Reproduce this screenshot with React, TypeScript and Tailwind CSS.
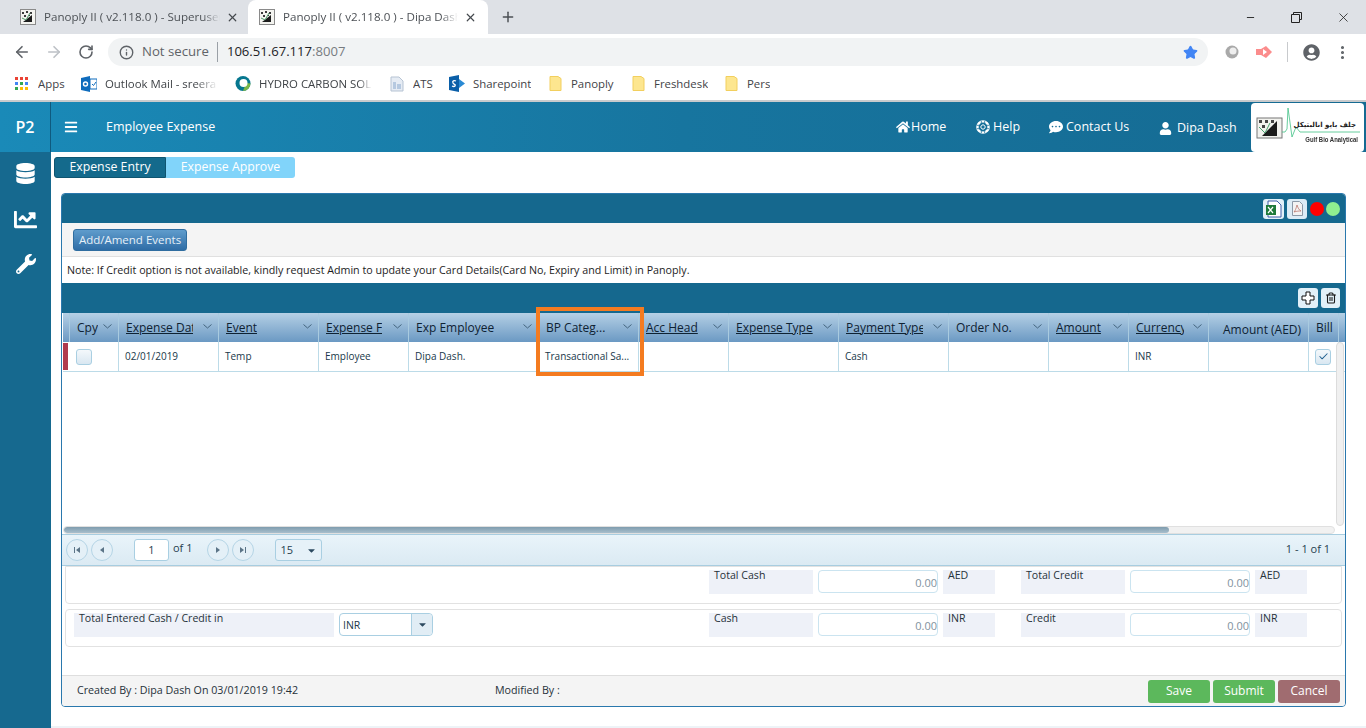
import React from "react";
import { ArrowLeft, ArrowRight, RotateCw, Info, Star, Plus, X, Minus, MoreVertical, Trash2, Check } from "lucide-react";
import { FaHome, FaCommentDots, FaUser, FaDatabase, FaChartLine, FaWrench, FaBars, FaUserCircle, FaCaretDown } from "react-icons/fa";

const Favicon = () => (
  <svg width="16" height="16" viewBox="0 0 16 16" className="shrink-0">
    <rect x="0.5" y="0.5" width="15" height="15" fill="#f4f4f0" stroke="#8a8a8a" />
    <path d="M3 13 L12 13 L12 6 Z" fill="#1c1c1c" />
    <path d="M2 3h2v2H2zM6 2h2v2H6zM10 3h2v2h-2zM4 6h2v2H4zM9 6h1v1H9z" fill="#3a3a3a" />
    <path d="M2 9 L6 11 L10 4" stroke="#4f9b6a" strokeWidth="1" fill="none" />
  </svg>
);

const Folder = () => (
  <svg width="13" height="17" viewBox="0 0 13 17" className="shrink-0">
    <path d="M1 1.5h8l3 2V15.5H1z" fill="#fde68f" stroke="#f2cf5e" />
  </svg>
);

const Tab = ({ title, active }: { title: string; active?: boolean }) => (
  <div className={active ? "flex items-center w-[240px] h-[34px] pl-[11px] pr-[11px] bg-white rounded-t-lg" : "flex items-center w-[248px] h-[34px] pl-[20px] pr-[9px]"}>
    <Favicon />
    <span className="ml-[8px] mr-[6px] flex-1 overflow-hidden whitespace-nowrap text-[11.6px] text-[#4d5156] [mask-image:linear-gradient(to_right,black_90%,transparent)]">{title}</span>
    <X size={13} strokeWidth={2.2} className="text-[#45494e] shrink-0" />
  </div>
);

const Bookmark = ({ w, icon, label, fade }: { w: string; icon: React.ReactNode; label: string; fade?: string }) => (
  <div className={`flex items-center shrink-0 ${w}`}>
    {icon}
    <span className={`whitespace-nowrap overflow-hidden text-[11.4px] text-[#3f4347] ${fade ?? ""}`}>{label}</span>
  </div>
);

const NavItem = ({ icon, label, cls }: { icon: React.ReactNode; label: string; cls: string }) => (
  <div className={`flex items-center text-white text-[12.5px] ${cls}`}>
    {icon}
    <span>{label}</span>
  </div>
);

const COLS = "grid grid-cols-[7px_49px_100px_100px_90px_130px_100px_90px_110px_110px_100px_80px_80px_100px_30px]";

const HeadCell = ({ label, u, noArrow, pt, mw }: { label: string; u?: boolean; noArrow?: boolean; pt?: boolean; mw?: string }) => (
  <div className="relative flex items-center h-full pl-[7px] border-r border-[#a9cbe0] overflow-hidden">
    <span className={`whitespace-nowrap overflow-hidden text-[12px] font-medium text-[#0e2233] ${mw ?? ""} ${u ? "underline" : ""} ${pt ? "pt-[4px] pl-[7px]" : ""}`}>{label}</span>
    {!noArrow && <svg width="9" height="5" viewBox="0 0 9 5" className="absolute right-[6px] top-[11px]"><path d="M0.5 0.5 L4.5 4 L8.5 0.5" stroke="#44657f" fill="none" /></svg>}
  </div>
);

const Cell = ({ children }: { children?: React.ReactNode }) => (
  <div className="flex items-center h-full pl-[6px] border-r border-[#bcdbe8] text-[10px] text-[#20384a] whitespace-nowrap overflow-hidden">{children}</div>
);

const PageBtn = ({ d, cls }: { d: string; cls?: string }) => (
  <div className={`flex items-center justify-center w-[22px] h-[22px] rounded-full border border-[#b5d5e6] bg-[#e4f0f7] ${cls ?? ""}`}>
    <svg width="8" height="8" viewBox="0 0 8 8"><path d={d} fill="#5b7487" /></svg>
  </div>
);

const Label = ({ w, text, cls }: { w: string; text: string; cls?: string }) => (
  <div className={`h-[24px] bg-[#eef1f8] text-[10.6px] leading-[10px] text-[#26313a] pl-[5px] shrink-0 ${w} ${cls ?? ""}`}>{text}</div>
);

const Amount = () => (
  <div className="w-[120px] h-[23px] shrink-0 ml-[5px] mr-[5px] rounded-[4px] border border-[#cbe4f0] bg-white flex items-end justify-end text-[11px] text-[#7f929e] pb-[3px] leading-[13px]">0.00</div>
);

const ActionBtn = ({ label, cls }: { label: string; cls: string }) => (
  <div className={`flex items-center justify-center w-[62px] h-[23px] rounded-[3px] text-white text-[12px] font-medium ${cls}`}>{label}</div>
);

export default function App() {
  return (
    <div className="relative w-[1366px] h-[728px] overflow-hidden bg-white flex flex-col font-['Open_Sans','Noto_Sans',sans-serif]">
      {/* Tab strip */}
      <div className="h-[34px] bg-[#dee1e6] flex items-center shrink-0">
        <Tab title="Panoply II ( v2.118.0 ) - Superuser" />
        <Tab title="Panoply II ( v2.118.0 ) - Dipa Dash" active />
        <Plus size={16} strokeWidth={2.2} className="ml-[12px] text-[#4b4f54]" />
        <div className="flex-1" />
        <Minus size={11} className="text-[#222] mr-[35px]" />
        <svg width="11" height="11" viewBox="0 0 11 11" className="mr-[34px]"><path d="M2.5 2.5V.5h8v7h-2M.5 2.5h8v8h-8z" fill="none" stroke="#222" /></svg>
        <X size={15} strokeWidth={1.3} className="text-[#222] mr-[15px]" />
      </div>
      {/* Toolbar */}
      <div className="h-[34px] bg-white flex items-center shrink-0 pl-[13px] pt-[2px]">
        <ArrowLeft size={18} strokeWidth={2.2} className="text-[#5f6368]" />
        <ArrowRight size={18} strokeWidth={2.2} className="text-[#bdc1c6] ml-[14px]" />
        <RotateCw size={16} strokeWidth={2.4} className="text-[#5f6368] ml-[15px]" />
        <div className="ml-[14px] w-[1100px] h-[28px] rounded-full bg-[#f1f3f4] flex items-center pl-[11px]">
          <Info size={15} strokeWidth={2.2} className="text-[#5f6368]" />
          <span className="ml-[8px] text-[13.2px] text-[#5f6368]">Not secure</span>
          <div className="w-px h-[20px] bg-[#9aa0a6] ml-[8px]" />
          <span className="ml-[9px] text-[13.1px] text-[#202124]">106.51.67.117<span className="text-[#777b80]">:8007</span></span>
          <div className="flex-1" />
          <Star size={15} fill="#4285f4" stroke="#4285f4" className="mr-[10px]" />
        </div>
        <svg width="16" height="16" viewBox="0 0 16 16" className="ml-[16px]"><circle cx="8" cy="8" r="6.5" fill="#a9a9a9" /><circle cx="9" cy="7" r="3.5" fill="#eee" /></svg>
        <svg width="18" height="14" viewBox="0 0 18 14" className="ml-[15px]"><path d="M1 4h5l5-3 6 6-6 6-5-3H1z" fill="#fb8c8c" /><path d="M8 4l4 3-4 3z" fill="#fff" /></svg>
        <div className="w-px h-[20px] bg-[#c8cacd] ml-[14px]" />
        <FaUserCircle size={17} className="text-[#5f6368] ml-[15px]" />
        <MoreVertical size={17} strokeWidth={2.4} className="text-[#5f6368] ml-[14px]" />
      </div>
      {/* Bookmarks */}
      <div className="h-[34px] bg-white flex items-center shrink-0 pl-[15px] border-b-[2px] border-[#c9cbcd]">
        <Bookmark
          w="w-[66px]"
          label="Apps"
          icon={
            <svg width="13" height="13" viewBox="0 0 13 13" className="mr-[10px]">
              <path d="M0 0h3v3H0z" fill="#ea4335" /><path d="M5 0h3v3H5z" fill="#ea4335" /><path d="M10 0h3v3h-3z" fill="#ea4335" />
              <path d="M0 5h3v3H0z" fill="#4285f4" /><path d="M5 5h3v3H5z" fill="#34a853" /><path d="M10 5h3v3h-3z" fill="#4285f4" />
              <path d="M0 10h3v3H0z" fill="#34a853" /><path d="M5 10h3v3H5z" fill="#fbbc05" /><path d="M10 10h3v3h-3z" fill="#fbbc05" />
            </svg>
          }
        />
        <Bookmark
          w="w-[154px]"
          label="Outlook Mail - sreera"
          fade="w-[113px] [mask-image:linear-gradient(to_right,black_80%,transparent)]"
          icon={
            <svg width="16" height="16" viewBox="0 0 16 16" className="mr-[8px] shrink-0">
              <path d="M0 2l9-2v16l-9-2z" fill="#0f6cbd" /><rect x="9" y="3" width="7" height="10" fill="#fff" stroke="#0f6cbd" />
              <circle cx="4.5" cy="8" r="2" fill="none" stroke="#fff" strokeWidth="1.4" /><path d="M11 8l1.5 1.5L15 6" stroke="#0f6cbd" fill="none" />
            </svg>
          }
        />
        <Bookmark
          w="w-[155px]"
          label="HYDRO CARBON SOL"
          fade="w-[113px] [mask-image:linear-gradient(to_right,black_88%,transparent)]"
          icon={
            <svg width="16" height="17" viewBox="0 0 16 17" className="mr-[8px] shrink-0">
              <circle cx="8" cy="8.5" r="7.5" fill="#06778f" /><path d="M8 16A7.5 7.5 0 0 0 15.5 8.5L11 8z" fill="#7ab648" /><circle cx="8.5" cy="8" r="4" fill="#fff" />
            </svg>
          }
        />
        <Bookmark
          w="w-[59px]"
          label="ATS"
          icon={
            <svg width="14" height="16" viewBox="0 0 14 16" className="mr-[9px] shrink-0">
              <path d="M1 1h8l4 4v10H1z" fill="#e6ecf4" stroke="#b6c3d3" /><path d="M3 6h3v7H3zM7 8h4v5H7z" fill="#b6c9e0" />
            </svg>
          }
        />
        <Bookmark
          w="w-[100px]"
          label="Sharepoint"
          icon={
            <svg width="16" height="17" viewBox="0 0 16 17" className="mr-[8px] shrink-0">
              <path d="M0 2l10-2v17L0 15z" fill="#0a5fa8" /><path d="M10 4l6 4.5-6 4.5z" fill="#2a8ad4" />
              <path d="M7 6C5 5 3 6 4 8s3 1 2 3c-1 1-2 .5-3 0" stroke="#fff" strokeWidth="1.3" fill="none" />
            </svg>
          }
        />
        <Bookmark w="w-[83px]" label="Panoply" icon={<span className="mr-[9px]"><Folder /></span>} />
        <Bookmark w="w-[93px]" label="Freshdesk" icon={<span className="mr-[9px]"><Folder /></span>} />
        <Bookmark w="w-[60px]" label="Pers" icon={<span className="mr-[9px]"><Folder /></span>} />
      </div>
      {/* App header */}
      <div className="h-[50px] shrink-0 bg-gradient-to-r from-[#1a8ab8] via-[#17759f] to-[#156a92] flex items-center">
        <div className="w-[51px] h-full border-r border-[#0f5a7e] flex items-center justify-center text-white font-semibold text-[16px] shrink-0">P2</div>
        <FaBars size={14} className="text-white ml-[13px]" />
        <span className="ml-[28px] text-white text-[12.5px]">Employee Expense</span>
        <div className="flex-1" />
        <NavItem cls="w-[80px]" icon={<FaHome size={14} className="mr-[1px]" />} label="Home" />
        <NavItem
          cls="w-[73px]"
          label="Help"
          icon={
            <svg width="14" height="14" viewBox="0 0 14 14" className="mr-[3px]">
              <circle cx="7" cy="7" r="5.6" fill="none" stroke="#fff" strokeWidth="2.4" />
              <circle cx="7" cy="7" r="2.2" fill="none" stroke="#fff" strokeWidth="1" />
              <path d="M5.3 1v4M8.7 1v4M5.3 9v4M8.7 9v4M1 5.3h4M1 8.7h4M9 5.3h4M9 8.7h4" stroke="#16709a" strokeWidth=".8" />
            </svg>
          }
        />
        <NavItem cls="w-[110px]" icon={<FaCommentDots size={14} className="mr-[3px]" />} label="Contact Us" />
        <NavItem cls="w-[92px] pt-[2px]" icon={<FaUser size={13} className="mr-[5px]" />} label="Dipa Dash" />
        <div className="w-[113px] h-[49px] mr-[2px] bg-white rounded-[4px] relative overflow-hidden shrink-0">
          <svg width="108" height="36" viewBox="0 0 108 36" className="absolute left-[5px] top-[4px]">
            <rect x="1" y="11" width="25" height="20" fill="#f2f2ee" stroke="#777" />
            <path d="M6 29 L21 29 L21 14 Z" fill="#1b1b1b" />
            <path d="M3 13h3v3H3zM9 13h3v3H9zM15 13h3v3h-3zM6 18h3v3H6z" fill="#444" />
            <path d="M3 20l6 6 5-10" stroke="#4aa36f" fill="none" />
            <path d="M26 25h3l2-3 1-21 4 29 4-10 4 5h60" stroke="#43c187" strokeWidth="0.8" fill="none" />
          </svg>
          <span className="absolute right-[8px] top-[16px] text-[7px] leading-[12px] font-bold text-[#222] font-['DejaVu_Sans',sans-serif] whitespace-nowrap" dir="rtl">جلف بايو انالبتيكل</span>
          <span className="absolute right-[6px] top-[31px] text-[7px] leading-[12px] font-bold text-[#333] whitespace-nowrap origin-right scale-x-[0.85] font-['Liberation_Sans',sans-serif]">Gulf Bio Analytical</span>
        </div>
      </div>
      {/* Body */}
      <div className="flex-1 flex min-h-0">
        <div className="w-[51px] shrink-0 bg-[#16698f] flex flex-col items-center pt-[11px] text-white">
          <FaDatabase size={21} />
          <FaChartLine size={23} className="mt-[24px]" />
          <FaWrench size={20} className="mt-[23px]" />
        </div>
        <div className="flex-1 min-w-0 flex flex-col pl-[3px]">
          <div className="flex pt-[5px] h-[41px] shrink-0 items-start">
            <div className="w-[112px] h-[21px] rounded-l-[3px] bg-[#146a8c] border border-[#0f5570] text-white text-[12.3px] flex items-center justify-center">Expense Entry</div>
            <div className="w-[129px] h-[21px] rounded-r-[3px] bg-[#81d4fa] text-white text-[12.3px] flex items-center justify-center">Expense Approve</div>
          </div>
          {/* Main panel */}
          <div className="ml-[7px] w-[1285px] h-[514px] rounded-[4px] border border-[#2a78ad] flex flex-col overflow-hidden bg-white shrink-0">
            <div className="h-[29px] bg-[#15688e] shrink-0 flex items-center justify-end pr-[5px]">
              <div className="w-[21px] h-[20px] rounded-[3px] bg-[#e2f0f8] flex items-center justify-center">
                <svg width="17" height="18" viewBox="0 0 17 18"><path d="M3 1h9l4 4v12H3z" fill="#fff" stroke="#3f5fa8" /><rect x="1" y="5" width="10" height="10" fill="#1f7a3a" /><path d="M3 7l5 6M8 7l-5 6" stroke="#fff" strokeWidth="1.2" /></svg>
              </div>
              <div className="w-[20px] h-[20px] ml-[3px] rounded-[3px] bg-[#dcecf6] flex items-center justify-center">
                <svg width="11" height="15" viewBox="0 0 11 15"><path d="M.5.5h7l3 3v11H.5z" fill="#f3f3f3" stroke="#8c9aa8" /><path d="M5 4c-1 4-2 6-3 7 3-1 5-1 7-1-2-1-3-3-4-6z" fill="none" stroke="#b66a5e" strokeWidth=".7" /></svg>
              </div>
              <div className="w-[14px] h-[14px] ml-[3px] rounded-full bg-[#ff0000]" />
              <div className="w-[14px] h-[14px] ml-[2px] rounded-full bg-[#90ee90]" />
            </div>
            <div className="h-[34px] shrink-0 bg-[#f4f4f4] border-b border-[#e0e0e0] flex items-center pl-[11px]">
              <div className="w-[114px] h-[22px] rounded-[3px] border border-[#2f6da0] bg-gradient-to-b from-[#5f9ccc] to-[#2f6da6] text-[11.5px] font-medium text-[#e6f0f8] flex items-center justify-center">Add/Amend Events</div>
            </div>
            <div className="h-[26px] shrink-0 flex items-center pl-[5px] text-[10.7px] font-medium text-[#1d1d1d] whitespace-nowrap">Note: If Credit option is not available, kindly request Admin to update your Card Details(Card No, Expiry and Limit) in Panoply.</div>
            <div className="h-[30px] shrink-0 bg-[#15688e] flex items-center justify-end pr-[5px]">
              <div className="w-[20px] h-[20px] rounded-[3px] bg-[#e2f0f8] flex items-center justify-center">
                <svg width="14" height="14" viewBox="0 0 14 14"><path d="M5 1h4v4h4v4H9v4H5V9H1V5h4z" fill="#fff" stroke="#111" /></svg>
              </div>
              <div className="w-[19px] h-[20px] ml-[3px] rounded-[3px] bg-[#e2f0f8] flex items-center justify-center">
                <Trash2 size={12} strokeWidth={2.2} className="text-[#1a1a1a]" />
              </div>
            </div>
            {/* Grid */}
            <div className={`${COLS} h-[29px] shrink-0 ml-[1px] bg-gradient-to-b from-[#b5d0e5] to-[#6b99c3]`}>
              <div className="border-r border-[#a9cbe0]" />
              <HeadCell label="Cpy" />
              <HeadCell label="Expense Date" u mw="max-w-[67px]" />
              <HeadCell label="Event" u />
              <HeadCell label="Expense For" u mw="max-w-[56px]" />
              <HeadCell label="Exp Employee" />
              <HeadCell label="BP Categ..." />
              <HeadCell label="Acc Head" u />
              <HeadCell label="Expense Type" u />
              <HeadCell label="Payment Type" u mw="max-w-[77px]" />
              <HeadCell label="Order No." />
              <HeadCell label="Amount" u />
              <HeadCell label="Currency" u mw="max-w-[48px]" />
              <HeadCell label="Amount (AED)" pt noArrow />
              <HeadCell label="Bill" noArrow />
            </div>
            <div className="relative flex-1 min-h-0">
              <div className={`${COLS} h-[30px] ml-[1px] border-b border-[#bcdbe8] items-stretch`}>
                <div className="py-[1px] bg-white"><div className="w-[5px] h-full bg-[#b03a4e]" /></div>
                <Cell>
                  <div className="w-[16px] h-[16px] rounded-[3px] border border-[#a9cfe2] bg-gradient-to-b from-[#f4f8fb] to-[#d9e7f1]" />
                </Cell>
                <Cell>02/01/2019</Cell>
                <Cell>Temp</Cell>
                <Cell>Employee</Cell>
                <Cell>Dipa Dash.</Cell>
                <Cell>Transactional Sa...</Cell>
                <Cell />
                <Cell />
                <Cell>Cash</Cell>
                <Cell />
                <Cell />
                <Cell>INR</Cell>
                <Cell />
                <Cell>
                  <div className="w-[16px] h-[16px] rounded-[3px] border border-[#a9cfe2] bg-gradient-to-b from-[#f4f8fb] to-[#d9e7f1] flex items-center justify-center">
                    <Check size={11} strokeWidth={2.2} className="text-[#1f5f8f]" />
                  </div>
                </Cell>
              </div>
              <div className="absolute right-[1px] top-0 bottom-0 w-[8px] rounded-full bg-[#f0f0f0] border border-[#dcdcdc]" />
            </div>
            <div className="h-[8px] shrink-0 bg-white pl-[1px] flex items-stretch">
              <div className="w-[1272px] h-[8px] rounded-full bg-[#f1f1f1] border border-[#e0e0e0] overflow-hidden">
                <div className="w-[1105px] h-full rounded-full bg-gradient-to-b from-[#7f9cae] to-[#a8bfcd]" />
              </div>
            </div>
            <div className="h-[32px] shrink-0 bg-gradient-to-b from-[#e9f4fa] to-[#dbeaf3] border-y border-[#a8cde0] flex items-center pl-[4px] text-[11px] text-[#26404f]">
              <PageBtn d="M1 1h1v6H1zM7 1v6L3 4z" />
              <PageBtn d="M6 1v6L2 4z" cls="ml-[3px]" />
              <div className="w-[35px] h-[22px] ml-[21px] rounded-[3px] border border-[#a9cfe2] bg-white flex items-center justify-center text-[11px]">1</div>
              <span className="ml-[4px] pb-[3px]">of 1</span>
              <PageBtn d="M2 1v6l4-3z" cls="ml-[15px]" />
              <PageBtn d="M1 1v6l4-3zM6 1h1v6H6z" cls="ml-[3px]" />
              <div className="w-[47px] h-[22px] ml-[21px] rounded-[3px] border border-[#a9cfe2] bg-[#e6f1f8] flex items-center justify-between px-[4px] text-[11px]">
                <span>15</span>
                <FaCaretDown size={11} className="text-[#2c4a60]" />
              </div>
              <div className="flex-1" />
              <span className="mr-[15px] pb-[2px]">1 - 1 of 1</span>
            </div>
            {/* Form */}
            <div className="h-[38px] shrink-0 mx-[3px] rounded-b-[4px] border border-[#e2e2e2] flex pt-[3px] pl-[643px]">
              <Label w="w-[104px]" text="Total Cash" />
              <Amount />
              <Label w="w-[52px]" text="AED" />
              <div className="w-[26px] shrink-0" />
              <Label w="w-[104px]" text="Total Credit" />
              <Amount />
              <Label w="w-[52px]" text="AED" />
            </div>
            <div className="h-[38px] shrink-0 mt-[5px] mx-[3px] rounded-[4px] border border-[#e2e2e2] flex pt-[3px] pl-[8px]">
              <Label w="w-[260px]" text="Total Entered Cash / Credit in" />
              <div className="w-[94px] h-[23px] shrink-0 ml-[5px] rounded-[4px] border border-[#a9cfe2] bg-white flex items-center text-[10.5px] text-[#20384a]">
                <span className="flex-1 pl-[3px] pt-[2px]">INR</span>
                <div className="w-[21px] h-full bg-[#e1edf5] border-l border-[#a9cfe2] rounded-r-[4px] flex items-center justify-center">
                  <FaCaretDown size={11} className="text-[#2c4a60]" />
                </div>
              </div>
              <div className="w-[276px] shrink-0" />
              <Label w="w-[104px]" text="Cash" />
              <Amount />
              <Label w="w-[52px]" text="INR" />
              <div className="w-[26px] shrink-0" />
              <Label w="w-[104px]" text="Credit" />
              <Amount />
              <Label w="w-[52px]" text="INR" />
            </div>
            <div className="h-[28px] shrink-0" />
            <div className="flex-none h-[31px] bg-[#f4f4f4] border-t border-[#dedede] flex items-center pl-[15px] text-[10.7px] font-medium text-[#26313a]">
              <span className="w-[418px] pb-[1px]">Created By : Dipa Dash On 03/01/2019 19:42</span>
              <span className="pb-[1px]">Modified By :</span>
              <div className="flex-1" />
              <ActionBtn label="Save" cls="bg-[#5cb85c]" />
              <ActionBtn label="Submit" cls="ml-[3px] bg-[#5cb85c]" />
              <ActionBtn label="Cancel" cls="ml-[3px] mr-[5px] bg-[#a06c70]" />
            </div>
          </div>
          <div className="flex-1" />
        </div>
      </div>
      <div className="absolute left-[51px] right-0 bottom-0 h-[2px] bg-[#eef3f7]" />
      {/* Highlight box */}
      <div className="absolute left-[536px] top-[307px] w-[108px] h-[69px] border-[4px] border-[#f47b20]" />
    </div>
  );
}
